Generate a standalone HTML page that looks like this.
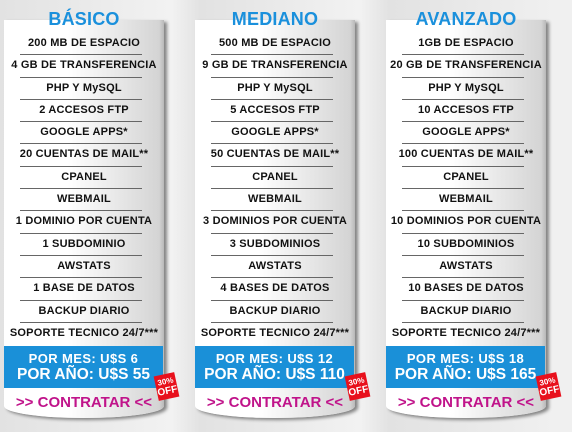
<!DOCTYPE html>
<html><head><meta charset="utf-8"><style>
*{margin:0;padding:0;box-sizing:border-box}
body{width:572px;height:432px;overflow:hidden;background:linear-gradient(90deg,#e2e2e2,#f2f2f2 30%,#e2e2e2 35%,#f2f2f2 63%,#e2e2e2 68%,#f0f0f0 97%);font-family:"Liberation Sans",Arial,sans-serif;position:relative}
.card{position:absolute;top:20px;width:160px;height:398px;background:linear-gradient(90deg,#fff 0%,#fff 40%,#d4d4d4 97%,#b8b8b8 100%);border-radius:0 0 50% 50%/0 0 12px 12px;box-shadow:3px 2px 3px rgba(0,0,0,.45)}
.title{position:absolute;top:9px;width:160px;text-align:center;font-weight:bold;font-size:18px;color:#1a90dc;letter-spacing:.2px}
.rows{position:absolute;top:13px;left:0;width:160px}
.row{height:22.3px;text-align:center;font-weight:bold;font-size:11px;line-height:20px;color:#111;position:relative;letter-spacing:.2px}
.row:after{content:"";position:absolute;left:16px;right:22px;bottom:0;height:1px;background:#666}
.row:last-child:after{display:none}
.price{position:absolute;top:326px;left:0;width:159px;height:42px;background:#1a90d8;color:#fff;font-weight:bold;text-align:center}
.p1{font-size:13px;line-height:15px;padding-top:5px;letter-spacing:.4px}
.p2{font-size:15.5px;line-height:18px}
.con{position:absolute;top:374px;width:160px;text-align:center;color:#c0138a;font-weight:bold;font-size:15px}
.off{position:absolute;top:354px;left:152px;width:21px;height:25px;background:#e8101c;color:#fff;font-weight:bold;transform:rotate(-12deg);text-align:center;line-height:9px;padding-top:3px}
.off b{display:block;font-size:8px}.off i{display:block;font-style:normal;font-size:10px;line-height:11px}
</style></head><body>

<div class="card" style="left:4px">
<div class="rows">
<div class="row">200 MB DE ESPACIO</div><div class="row">4 GB DE TRANSFERENCIA</div><div class="row">PHP Y MySQL</div><div class="row">2 ACCESOS FTP</div><div class="row">GOOGLE APPS*</div><div class="row">20 CUENTAS DE MAIL**</div><div class="row">CPANEL</div><div class="row">WEBMAIL</div><div class="row">1 DOMINIO POR CUENTA</div><div class="row">1 SUBDOMINIO</div><div class="row">AWSTATS</div><div class="row">1 BASE DE DATOS</div><div class="row">BACKUP DIARIO</div><div class="row">SOPORTE TECNICO 24/7***</div>
</div>
<div class="price"><div class="p1">POR MES: U$S 6</div><div class="p2">POR AÑO: U$S 55</div></div>
<div class="con">&gt;&gt; CONTRATAR &lt;&lt;</div>
<div class="off"><b>30%</b><i>OFF</i></div>
</div>
<div class="title" style="left:4px">BÁSICO</div>

<div class="card" style="left:195px">
<div class="rows">
<div class="row">500 MB DE ESPACIO</div><div class="row">9 GB DE TRANSFERENCIA</div><div class="row">PHP Y MySQL</div><div class="row">5 ACCESOS FTP</div><div class="row">GOOGLE APPS*</div><div class="row">50 CUENTAS DE MAIL**</div><div class="row">CPANEL</div><div class="row">WEBMAIL</div><div class="row">3 DOMINIOS POR CUENTA</div><div class="row">3 SUBDOMINIOS</div><div class="row">AWSTATS</div><div class="row">4 BASES DE DATOS</div><div class="row">BACKUP DIARIO</div><div class="row">SOPORTE TECNICO 24/7***</div>
</div>
<div class="price"><div class="p1">POR MES: U$S 12</div><div class="p2">POR AÑO: U$S 110</div></div>
<div class="con">&gt;&gt; CONTRATAR &lt;&lt;</div>
<div class="off"><b>30%</b><i>OFF</i></div>
</div>
<div class="title" style="left:195px">MEDIANO</div>

<div class="card" style="left:386px">
<div class="rows">
<div class="row">1GB DE ESPACIO</div><div class="row">20 GB DE TRANSFERENCIA</div><div class="row">PHP Y MySQL</div><div class="row">10 ACCESOS FTP</div><div class="row">GOOGLE APPS*</div><div class="row">100 CUENTAS DE MAIL**</div><div class="row">CPANEL</div><div class="row">WEBMAIL</div><div class="row">10 DOMINIOS POR CUENTA</div><div class="row">10 SUBDOMINIOS</div><div class="row">AWSTATS</div><div class="row">10 BASES DE DATOS</div><div class="row">BACKUP DIARIO</div><div class="row">SOPORTE TECNICO 24/7***</div>
</div>
<div class="price"><div class="p1">POR MES: U$S 18</div><div class="p2">POR AÑO: U$S 165</div></div>
<div class="con">&gt;&gt; CONTRATAR &lt;&lt;</div>
<div class="off"><b>30%</b><i>OFF</i></div>
</div>
<div class="title" style="left:386px">AVANZADO</div>

</body></html>
